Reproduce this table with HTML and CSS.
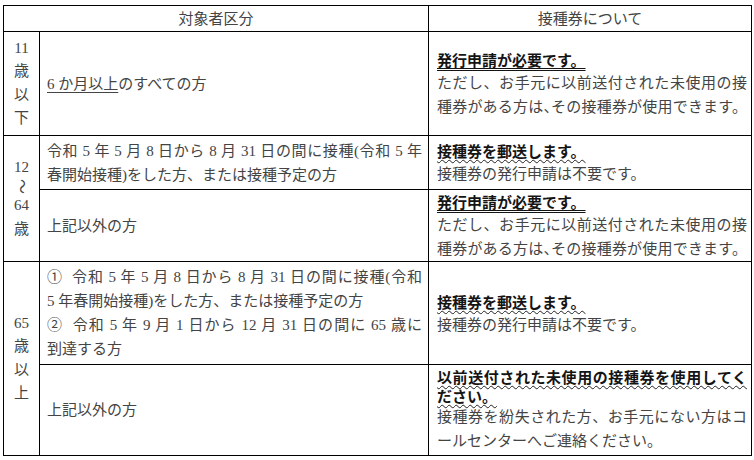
FILE: index.html
```html
<!DOCTYPE html>
<html lang="ja">
<head>
<meta charset="utf-8">
<title>接種券について</title>
<link rel="stylesheet" href="styles.css">
</head>
<body>
<table class="tbl">
  <colgroup><col class="c-age"><col class="c-target"><col class="c-ticket"></colgroup>
  <thead>
    <tr class="r-head"><th colspan="2">対象者区分</th><th>接種券について</th></tr>
  </thead>
  <tbody>
    <tr class="r1">
      <td class="age"><span class="al">11</span><span class="al">歳</span><span class="al">以</span><span class="al">下</span></td>
      <td class="tgt"><span class="u1">6 か月以上</span>のすべての方</td>
      <td class="tkt">
        <span class="em dbl">発行申請が必要です。</span>
        <span class="ln jl">ただし、お手元に以前送付された未使用の接</span>
        <span class="ln jl">種券がある方は<span class="pc">、</span>その接種券が使用できます。</span>
      </td>
    </tr>
    <tr class="r2a">
      <td class="age" rowspan="2"><span class="al">12</span><span class="al wave"><span class="rot">〜</span></span><span class="al">64</span><span class="al">歳</span></td>
      <td class="tgt">
        <span class="ln jl">令和 5 年 5 月 8 日から 8 月 31 日の間に接種(令和 5 年</span>
        <span class="ln">春開始接種)をした方、または接種予定の方</span>
      </td>
      <td class="tkt">
        <span class="em wavy">接種券を郵送します。</span>
        <span class="ln">接種券の発行申請は不要です。</span>
      </td>
    </tr>
    <tr class="r2b">
      <td class="tgt">上記以外の方</td>
      <td class="tkt">
        <span class="em dbl">発行申請が必要です。</span>
        <span class="ln jl">ただし、お手元に以前送付された未使用の接</span>
        <span class="ln jl">種券がある方は<span class="pc">、</span>その接種券が使用できます。</span>
      </td>
    </tr>
    <tr class="r3a">
      <td class="age" rowspan="2"><span class="al">65</span><span class="al">歳</span><span class="al">以</span><span class="al">上</span></td>
      <td class="tgt">
        <span class="ln jl">①&nbsp;&nbsp;令和 5 年 5 月 8 日から 8 月 31 日の間に接種(令和</span>
        <span class="ln">5 年春開始接種)をした方、または接種予定の方</span>
        <span class="ln jl">②&nbsp;&nbsp;令和 5 年 9 月 1 日から 12 月 31 日の間に 65 歳に</span>
        <span class="ln">到達する方</span>
      </td>
      <td class="tkt">
        <span class="em wavy">接種券を郵送します。</span>
        <span class="ln">接種券の発行申請は不要です。</span>
      </td>
    </tr>
    <tr class="r3b">
      <td class="tgt">上記以外の方</td>
      <td class="tkt">
        <span class="em wavy tight jl">以前送付された未使用の接種券を使用してく</span>
        <span class="em wavy tight">ださい。</span>
        <span class="ln jl">接種券を紛失された方、お手元にない方はコ</span>
        <span class="ln">ールセンターへご連絡ください。</span>
      </td>
    </tr>
  </tbody>
</table>
</body>
</html>
```

FILE: styles.css
```css
* { box-sizing: border-box; }
html, body { margin: 0; padding: 0; background: #fff; }
body {
  padding: 5px 0 0 3px;
  font-family: "Liberation Serif", "Noto Sans CJK JP", serif;
  font-size: 15px;
  color: #444;
}
.tbl {
  border-collapse: collapse;
  table-layout: fixed;
  width: 748px;
}
.tbl th, .tbl td {
  border: 1px solid #000;
  padding: 0;
  vertical-align: middle;
}
.c-age { width: 36px; }
.c-target { width: 389px; }
.c-ticket { width: 323px; }

.tbl th {
  font-weight: normal;
  text-align: center;
  line-height: 20px;
}
.r-head th { height: 26px; }
.r1 > td { height: 104px; }
.r2a > td { height: 54px; }
.r2b > td { height: 71px; }
.r3a > td { height: 103px; }
.r3b > td { height: 91px; }

.tbl .age { text-align: center; }
.al { display: block; line-height: 23.5px; }
.al.wave { line-height: 15px; }
.rot { display: inline-block; transform: rotate(90deg); }

.tbl .tgt { padding: 0 6px 0 7px; line-height: 24px; }
.tbl .tkt { padding: 0 4px 0 8px; }

.ln { display: block; line-height: 24px; }
.jl { text-align: justify; text-align-last: justify; }
.pc { font-feature-settings: "halt"; }

.u1 {
  text-decoration: underline;
  text-decoration-thickness: 1px;
  text-underline-offset: 3px;
}

.em {
  display: block;
  font-family: "Noto Sans CJK JP", sans-serif;
  font-weight: 700;
  color: #141414;
  line-height: 23px;
}
.em.tight { line-height: 19px; }
.dbl {
  text-decoration: underline double #141414;
  text-decoration-thickness: 1px;
  text-underline-offset: 2px;
}
.wavy {
  text-decoration: underline wavy #222;
  text-decoration-thickness: 1px;
  text-underline-offset: 2px;
}
```
